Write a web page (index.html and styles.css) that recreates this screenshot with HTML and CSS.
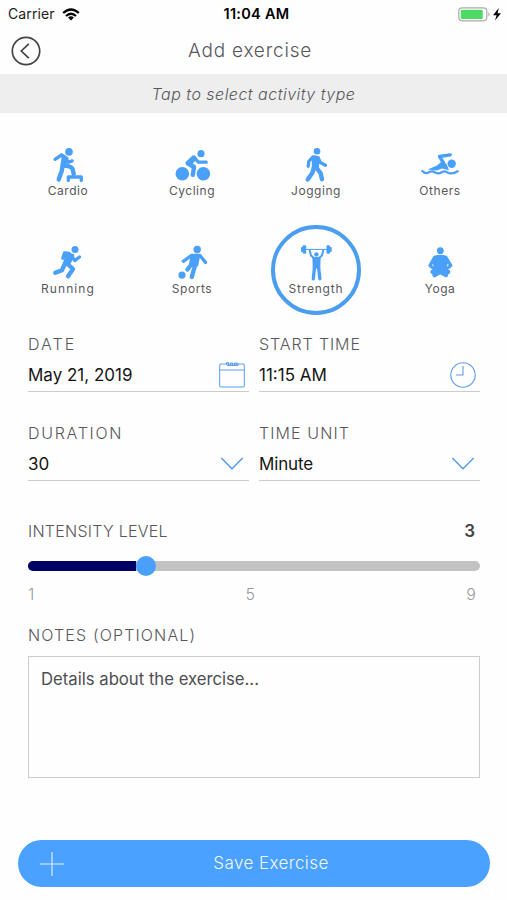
FILE: index.html
```html
<!DOCTYPE html>
<html lang="en">
<head>
<meta charset="utf-8">
<title>Add exercise</title>
<link rel="stylesheet" href="styles.css">
</head>
<body>
<div class="status">
  <div class="carrier"><span class="carrier-name">Carrier</span>
    <svg width="18" height="13" viewBox="0 0 18 13" fill="none" stroke="#000" stroke-width="2.3"><path d="M1.2 5Q9-2 16.8 5M4 8Q9 3.6 14 8"/><path d="M6.1 9.5Q9 7.2 11.9 9.5L9 12.5Z" fill="#000" stroke="none"/></svg>
  </div>
  <span class="clock">11:04 AM</span>
  <div class="power">
    <svg width="44" height="15" viewBox="0 0 44 15"><rect x=".8" y=".8" width="28" height="13" rx="3.5" fill="#fff" stroke="#aaa" stroke-width="1.2"/><rect x="2.7" y="2.7" width="22" height="9.2" rx="1.2" fill="#4cd964"/><path d="M30.4 5.2Q33 7.3 30.4 9.5Z" fill="#aaa"/><path d="M40.8 1L35 8.2H38.6L37 13.6L43 6.3H39.5Z"/></svg>
  </div>
</div>
<header class="header">
  <svg class="back" width="30" height="30" viewBox="0 0 30 30" fill="none" stroke="#444" stroke-width="1.7"><circle cx="15" cy="15" r="13.7"/><path d="M17.8 7.8L10.3 15L17.8 22.2"/></svg>
  <h1 class="title">Add exercise</h1>
</header>
<div class="hint"><span class="hint-text">Tap to select activity type</span></div>
<div class="activities">
  <div class="activity">
    <svg class="icon" viewBox="0 0 40 36"><circle class="f" cx="21" cy="4.9" r="3.8"/><path class="f" d="M13 6.5L20.5 10.5L19.5 15L17.5 19.5L12.5 18.5L13.5 11Z"/><path class="s" d="M7 12.3L13.5 8L17.5 10.5M18.5 12L20.5 15.3L24.2 13.9"/><path class="s w" d="M15 17L13.7 24L10.7 32.5M16 18.5Q23.5 19 24.7 22.5L25.7 27"/><path class="s" d="M20.3 33.4V30H33.3V33.4"/></svg>
    <span class="name">Cardio</span>
  </div>
  <div class="activity">
    <svg class="icon" viewBox="0 0 40 36"><circle class="f" cx="29" cy="6.7" r="3.6"/><circle class="f" cx="10.3" cy="26.8" r="6.8"/><circle class="f" cx="31.4" cy="26.8" r="6.8"/><path class="s w" d="M16 16L22 10.8"/><path class="f" d="M13 16L21 8L24.5 12.5L19.5 18Z"/><path class="s" d="M22.5 10.5L26.3 15.2H34.2"/><path class="s w" d="M16 16.5L22 20L20.8 27.8"/></svg>
    <span class="name">Cycling</span>
  </div>
  <div class="activity">
    <svg class="icon" viewBox="0 0 40 36"><circle class="f" cx="21" cy="4.3" r="3.3"/><path class="f" d="M16 9Q19.5 7.2 23.5 10L23 21L15.7 22Z"/><path class="s" d="M17 10L12.8 14.3L12.2 19.3M22.3 11L24.3 15.6L29.5 18.2"/><path class="s w" d="M18 20.5L16.3 26L11.7 32.5M20.2 20.5L24.6 26.2L26 32.2"/></svg>
    <span class="name">Jogging</span>
  </div>
  <div class="activity">
    <svg class="icon" viewBox="0 0 40 36"><circle class="f" cx="31.7" cy="16.7" r="4.2"/><path class="f" d="M19 9.5L23 13L27 18L29 23.2L22 21.5L17 23.5L7.5 22.5L17 18.5L21 15Z"/><path class="s" d="M30.3 7.8L19.5 9.5L23.3 15.5"/><path class="s wave" d="M2.3 24Q5.5 27.5 9 25.3Q12 23.5 15 25.5Q18.5 27.5 21.8 25.3Q24.5 23.5 27.5 25.5Q32 27.7 37.7 24.3"/></svg>
    <span class="name">Others</span>
  </div>
  <div class="activity">
    <svg class="icon" viewBox="0 0 40 36"><circle class="f" cx="27" cy="4.5" r="3.5"/><path class="f" d="M18 6.5L26.5 9.5L25 14.5L21 21L15 18.5Z"/><path class="s" d="M21 8.5L16.5 8L14.8 13.3M24 11.3L26.8 15.6L31.5 12"/><path class="s w" d="M18.5 18L25 24L20 31.2M17 18.5L14 25.2L7.3 27.7"/></svg>
    <span class="name n-wide">Running</span>
  </div>
  <div class="activity">
    <svg class="icon" viewBox="0 0 40 36"><circle class="f" cx="25.2" cy="4.5" r="3.7"/><circle class="f" cx="10" cy="30.1" r="3.6"/><path class="f" d="M18.5 9L28.5 9.5L26 21.5L17 20.5Z"/><path class="s" d="M11.3 16.3L19.3 10.5H28L33.5 17.4"/><path class="s w" d="M19.3 19.5L15.5 24.5M23 20.5L19.8 32"/></svg>
    <span class="name">Sports</span>
  </div>
  <div class="activity selected">
    <svg class="icon" viewBox="0 0 40 36"><path class="bar" d="M6 4.4H35"/><rect class="f" x="6.7" y=".2" width="3.5" height="8.6" rx="1"/><rect class="f" x="30.5" y=".2" width="3.5" height="8.6" rx="1"/><rect class="f" x="5" y="2" width="2.2" height="5" rx=".7"/><rect class="f" x="33.5" y="2" width="2.2" height="5" rx=".7"/><circle class="f" cx="20.4" cy="9.4" r="2.2"/><path class="s thin" d="M13.8 5.8L15 10.5L18 13H23L26 10.5L27.2 5.8"/><path class="f" d="M16.3 12H24.7L24.2 23.5H16.8Z"/><path class="s" d="M18.6 21L17.3 33.8M22.4 21L23.9 33.8"/></svg>
    <span class="name n-mid">Strength</span>
  </div>
  <div class="activity">
    <svg class="icon" viewBox="0 0 40 36"><circle class="f" cx="20.3" cy="5.7" r="3.4"/><path class="f" d="M14 11Q20.3 8.5 26.6 11L28.5 17L26.5 22L26.5 26L20.3 28L14.1 26L14 22L12 17Z"/><path class="s" d="M14.5 12.5L10 20.5L15.5 25M26 12.5L30.8 20.5L25 25"/><path class="s w" d="M12.5 27L20 26.8L26 30M28.2 27L20.5 26.8L14.5 30"/></svg>
    <span class="name">Yoga</span>
  </div>
</div>
<main class="form">
  <div class="fields">
    <div class="field">
      <label class="label l-date">DATE</label>
      <div class="control"><span>May 21, 2019</span>
        <svg width="26" height="26" viewBox="0 0 26 26" fill="none" stroke="#5a9cf0" stroke-width="1"><rect x=".7" y="2" width="24.6" height="23" rx=".8"/><path d="M1 8H25M7.5 2.5V.6H9.5V3.5H11.5V1H13.5V3.5H15.5V1H17.5V3.5M8 3.5H19V.8"/></svg>
      </div>
    </div>
    <div class="field">
      <label class="label l-start">START TIME</label>
      <div class="control"><span>11:15 AM</span>
        <svg width="26" height="26" viewBox="0 0 26 26" fill="none" stroke="#5a9cf0" stroke-width="1.1"><circle cx="13" cy="13" r="12.2"/><path d="M13 4V13H6"/></svg>
      </div>
    </div>
    <div class="field">
      <label class="label l-duration">DURATION</label>
      <div class="control"><span>30</span>
        <svg width="26" height="26" viewBox="0 0 26 26" fill="none" stroke="#4f98f5" stroke-width="1.4"><path d="M2.3 7L13 17.7L23.7 7"/></svg>
      </div>
    </div>
    <div class="field">
      <label class="label l-unit">TIME UNIT</label>
      <div class="control"><span class="v-unit">Minute</span>
        <svg width="26" height="26" viewBox="0 0 26 26" fill="none" stroke="#4f98f5" stroke-width="1.4"><path d="M2.3 7L13 17.7L23.7 7"/></svg>
      </div>
    </div>
  </div>
  <div class="intensity"><span class="label l-intensity">INTENSITY LEVEL</span><b class="level">3</b></div>
  <div class="track"><div class="filled"></div><div class="thumb"></div></div>
  <div class="scale"><span>1</span><span>5</span><span>9</span></div>
  <div class="label l-notes">NOTES (OPTIONAL)</div>
  <div class="notes">Details about the exercise...</div>
</main>
<div class="save">
  <svg width="24" height="24" viewBox="0 0 24 24" stroke="#e4f0ff" stroke-width="1.1"><path d="M12 0V24M0 12H24"/></svg>
  <span class="save-text">Save Exercise</span>
</div>
</body>
</html>
```
FILE: styles.css
```css
* { box-sizing: border-box; }
body {
  margin: 0;
  width: 507px;
  height: 900px;
  overflow: hidden;
  background: #fefefe;
  color: #58585c;
  font-family: Inter, "Liberation Sans", sans-serif;
}
svg { display: block; flex: none; }

.status {
  display: grid;
  grid-template-columns: 1fr auto 1fr;
  align-items: center;
  height: 28px;
  padding: 0 5px 0 8px;
  font-size: 14px;
  line-height: 28px;
  color: #1c1c1c;
}
.carrier { display: flex; align-items: center; gap: 7px; }
.carrier-name { letter-spacing: 0.1px; }
.clock { font-weight: 600; color: #000; font-size: 14.5px; letter-spacing: 0.3px; margin-left: 3px; }
.power { justify-self: end; }

.header {
  display: grid;
  grid-template-columns: 42px 1fr 42px;
  align-items: center;
  height: 46px;
  padding: 0 0 1px;
}
.back { justify-self: end; margin-right: 1px; }
.title { margin: 0; padding-right: 7px; text-align: center; font-size: 19px; line-height: 30px; font-weight: 350; letter-spacing: 0.8px; }
.hint { height: 39px; line-height: 40px; background: #eee; text-align: center; font-size: 16px; font-style: italic; font-weight: 350; letter-spacing: 0.48px; }

.activities {
  display: grid;
  grid-template-columns: repeat(4, 90px);
  grid-auto-rows: 90px;
  gap: 8px 34px;
  padding: 14px 0 0 23px;
}
.activity { display: flex; flex-direction: column; align-items: center; padding-top: 20px; }
.selected { border: 4px solid #4b9df0; border-radius: 50%; padding-top: 16px; }
.icon { width: 40px; height: 36px; }
.f { fill: #4a9ff8; }
.s { fill: none; stroke: #4a9ff8; stroke-width: 3.3; stroke-linecap: round; stroke-linejoin: round; }
.w { stroke-width: 4.4; }
.thin { stroke-width: 2; }
.wave { stroke-width: 2.3; }
.bar { stroke: #4a9ff8; stroke-width: 1; }
.name { font-size: 12px; line-height: 16px; letter-spacing: 0.55px; }
.n-wide { letter-spacing: 1.1px; }
.n-mid { letter-spacing: 0.8px; }

.form { padding: 19px 27px 0 28px; }
.fields { display: grid; grid-template-columns: 221px 221px; column-gap: 10px; row-gap: 31px; }
.field { height: 58px; border-bottom: 1px solid #ccc; }
.label { display: block; font-size: 16px; line-height: 20px; font-weight: 300; white-space: nowrap; }
.l-date { letter-spacing: 2px; }
.l-start { letter-spacing: 0.9px; }
.l-duration { letter-spacing: 1.7px; }
.l-unit { letter-spacing: 1.1px; }
.l-intensity { letter-spacing: 0.25px; }
.l-notes { margin-top: 21px; letter-spacing: 1.15px; }
.control { display: flex; justify-content: space-between; align-items: center; height: 26px; margin-top: 8px; padding-right: 4px; font-size: 17px; color: #151515; }
.v-unit { letter-spacing: -0.15px; }
.intensity { display: flex; justify-content: space-between; align-items: center; height: 20px; margin-top: 40px; padding-right: 5px; }
.level { font-size: 17px; font-weight: 600; color: #444; }
.track { display: flex; align-items: center; height: 10px; margin-top: 20px; border-radius: 5px; background: #c2c2c2; }
.filled { width: 108px; height: 10px; border-radius: 5px 0 0 5px; background: #000066; }
.thumb { width: 20px; height: 20px; border-radius: 50%; background: #4a9ffc; }
.scale { display: flex; justify-content: space-between; height: 20px; margin-top: 13px; padding-right: 4px; font-size: 16px; line-height: 20px; font-weight: 300; color: #999; }
.notes { height: 122px; margin-top: 11px; border: 1px solid #ccc; padding: 10px 12px; font-size: 16.7px; line-height: 24px; color: #4d4d52; }
.save { display: grid; grid-template-columns: 24px 1fr 24px; align-items: center; height: 47px; margin: 62px 17px 0 18px; padding: 0 22px; border-radius: 24px; background: #4ba1ff; color: #f0f6ff; }
.save-text { text-align: center; padding: 0 0 2px 34px; font-size: 17px; font-weight: 300; letter-spacing: 0.4px; line-height: 24px; }
```
